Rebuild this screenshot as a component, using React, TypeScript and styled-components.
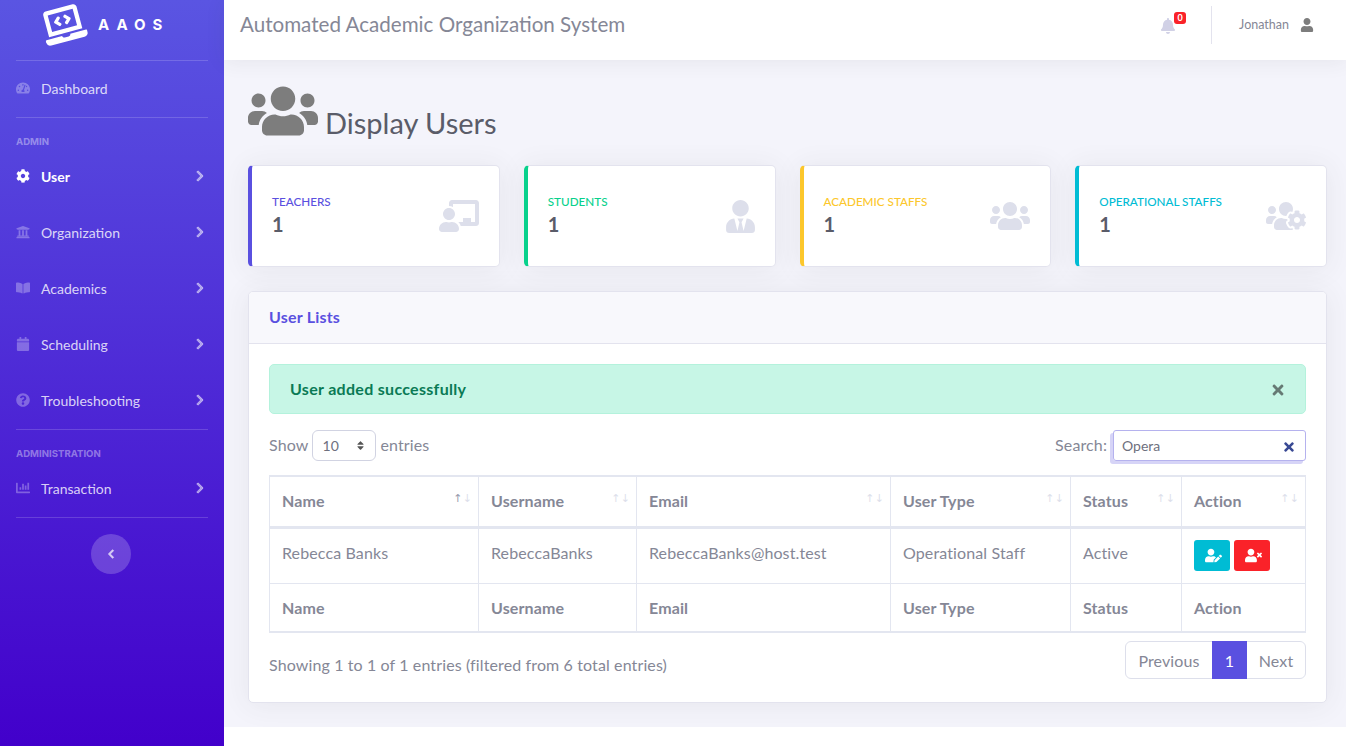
import React from "react";
import styled, { createGlobalStyle } from "styled-components";
import {
  FaBell, FaBookOpen, FaCalendar, FaChalkboardTeacher, FaChartBar, FaChevronLeft, FaChevronRight,
  FaCog, FaLaptopCode, FaQuestionCircle, FaSort, FaTachometerAlt, FaTimes, FaUniversity, FaUser,
  FaUserEdit, FaUserTie, FaUserTimes, FaUsers, FaUsersCog,
} from "react-icons/fa";

const BODY_FONT = `Lato, "Open Sans", sans-serif`;

const GlobalStyle = createGlobalStyle`
  html, body { margin: 0; padding: 0; background: #fff; }
  body { font-family: ${BODY_FONT}; color: #858796; overflow: hidden; }
  * { box-sizing: border-box; }
`;

const Shell = styled.div`
  display: flex;
  align-items: flex-start;
  width: 1346px;
`;

const Sidebar = styled.aside`
  width: 224px;
  height: 746px;
  flex: none;
  padding: 0 16px;
  background: linear-gradient(180deg, #5a55e2 0%, #4200cb 100%);
`;

const Brand = styled.div`
  height: 60px;
  display: flex;
  align-items: center;
  gap: 13px;
  padding: 0 0 11px 26px;
  color: #fff;
  svg { transform: rotate(-15deg); font-size: 43px; flex: none; }
`;

const BrandText = styled.span`
  font-family: Inter, sans-serif;
  font-weight: 700;
  font-size: 15px;
  letter-spacing: 7px;
`;

const Divider = styled.hr`
  margin: 0;
  border: 0;
  border-top: 1px solid rgba(255, 255, 255, 0.17);
`;

const NavItem = styled.a<{ $active?: boolean }>`
  height: 56px;
  display: flex;
  align-items: center;
  padding-bottom: 2px;
  font-size: 14px;
  color: ${(p) => (p.$active ? "#fff" : "rgba(255, 255, 255, 0.8)")};
  font-weight: ${(p) => (p.$active ? 700 : 400)};
`;

const NavIcon = styled.span<{ $active?: boolean }>`
  width: 25px;
  display: flex;
  font-size: 14px;
  color: ${(p) => (p.$active ? "#fff" : "rgba(255, 255, 255, 0.3)")};
`;

const NavLabel = styled.span`
  flex: 1;
`;

const NavArrow = styled.span`
  display: flex;
  font-size: 12px;
  margin-right: 2px;
  color: rgba(255, 255, 255, 0.55);
  svg { stroke: currentColor; stroke-width: 30px; }
`;

const NavHeading = styled.div`
  height: 31px;
  padding-top: 18px;
  font-family: Inter, sans-serif;
  font-size: 9.6px;
  line-height: 11px;
  font-weight: 700;
  color: rgba(255, 255, 255, 0.4);
`;

const ToggleRow = styled.div`
  display: flex;
  justify-content: center;
  padding: 16px 2px 0 0;
`;

const Toggle = styled.button`
  width: 40px;
  height: 40px;
  border: 0;
  padding: 0;
  border-radius: 50%;
  display: flex;
  align-items: center;
  justify-content: center;
  font-size: 10px;
  color: rgba(255, 255, 255, 0.7);
  background: rgba(255, 255, 255, 0.2);
  svg { stroke: currentColor; stroke-width: 30px; }
`;

const Main = styled.main`
  width: 1122px;
  background: #f4f4fb;
`;

const Topbar = styled.header`
  height: 60px;
  background: #fff;
  display: flex;
  align-items: center;
  padding: 0 32px 10px 16px;
  box-shadow: 0 2px 20px rgba(58, 59, 69, 0.08);
  position: relative;
`;

const AppTitle = styled.div`
  flex: 1;
  font-size: 20.6px;
  line-height: 24px;
  margin-top: -3px;
  color: #858796;
`;

const BellWrap = styled.div`
  position: relative;
  display: flex;
  font-size: 16px;
  color: #d1d1e6;
  margin-right: 35px;
  margin-top: 1px;
`;

const Badge = styled.span`
  position: absolute;
  top: -6px;
  left: 14px;
  width: 12px;
  height: 12px;
  border-radius: 3px;
  background: #fa2229;
  color: #fff;
  font-size: 9px;
  line-height: 12px;
  font-weight: 700;
  text-align: center;
`;

const TopDivider = styled.div`
  width: 1px;
  height: 38px;
  margin: 0 27px 0 0;
  background: #e3e3ee;
`;

const UserName = styled.span`
  font-size: 12.5px;
  margin-top: -2px;
  color: #858796;
  margin-right: 11px;
`;

const UserIcon = styled.span`
  display: flex;
  font-size: 14px;
  color: #7d7d7d;
`;

const Content = styled.div`
  padding: 24px 19px 24px 24px;
`;

const PageTitle = styled.div`
  display: flex;
  align-items: flex-end;
  gap: 8px;
  height: 53px;
  margin-bottom: 28px;
  font-size: 29px;
  line-height: 34px;
  color: #5a5c69;
  svg { font-size: 70px; height: 56px; color: #7d7d7d; flex: none; margin-bottom: -2px; }
`;

const TitleText = styled.span`
  margin-bottom: -3px;
  margin-left: -1px;
`;

const Stats = styled.div`
  display: grid;
  grid-template-columns: repeat(4, 1fr);
  gap: 24px;
  margin-bottom: 24px;
`;

const StatCard = styled.div<{ $color: string }>`
  height: 102px;
  display: flex;
  align-items: center;
  background: #fff;
  border: 1px solid #e3e3ee;
  border-left: 4px solid ${(p) => p.$color};
  border-radius: 5px;
  padding: 0 20px;
  box-shadow: 0 2px 28px rgba(58, 59, 69, 0.08);
`;

const StatBody = styled.div`
  flex: 1;
`;

const StatLabel = styled.div<{ $color: string }>`
  font-size: 11.7px;
  line-height: 14px;
  font-weight: 500;
  color: ${(p) => p.$color};
  text-transform: uppercase;
  margin-bottom: 4px;
`;

const StatValue = styled.div`
  font-size: 20px;
  line-height: 24px;
  font-weight: 700;
  color: #5a5c69;
  margin-bottom: 2px;
`;

const StatIcon = styled.span<{ $size?: number }>`
  display: flex;
  font-size: ${(p) => p.$size ?? 40}px;
  margin-right: ${(p) => (p.$size ? -2 : 0)}px;
  color: #dddfeb;
`;

const Panel = styled.section`
  height: 412px;
  background: #fff;
  border: 1px solid #e3e3ee;
  border-radius: 5px;
  box-shadow: 0 2px 28px rgba(58, 59, 69, 0.08);
  overflow: hidden;
  font-size: 16px;
  letter-spacing: 0.12px;
`;

const PanelHeader = styled.div`
  height: 52px;
  background: #f8f8fc;
  border-bottom: 1px solid #e3e3ee;
  display: flex;
  align-items: center;
  padding-left: 20px;
  padding-bottom: 3px;
  font-weight: 700;
  letter-spacing: 0.2px;
  color: #5a50e0;
`;

const PanelBody = styled.div`
  padding: 20px 20px 0;
`;

const Alert = styled.div`
  height: 50px;
  display: flex;
  align-items: center;
  justify-content: space-between;
  padding: 0 21px 2px 20px;
  margin-bottom: 16px;
  background: #c7f6e6;
  border: 1px solid #b4f2dc;
  border-radius: 5px;
  font-weight: 700;
  letter-spacing: 0.3px;
  color: #0a7a55;
`;

const AlertClose = styled.span`
  display: flex;
  font-size: 16px;
  color: #667a74;
  margin-top: 3px;
  margin-right: -2px;
`;

const Controls = styled.div`
  display: flex;
  justify-content: space-between;
  align-items: center;
  height: 31px;
  margin-bottom: 14px;
`;

const ControlGroup = styled.div`
  display: flex;
  align-items: center;
  gap: 4px;
  margin-top: -3px;
`;

const LengthSelect = styled.div`
  width: 64px;
  height: 31px;
  margin-top: 3px;
  display: flex;
  align-items: center;
  justify-content: space-between;
  padding: 0 9px;
  border: 1px solid #d1d3e2;
  border-radius: 6px;
  font-size: 14px;
  color: #6e707e;
  svg { font-size: 11px; color: #555; }
`;

const SearchBox = styled.div`
  width: 193px;
  height: 31px;
  margin-top: 3px;
  margin-left: 2px;
  display: flex;
  align-items: center;
  padding: 0 9px 0 8px;
  border: 1px solid #b5b2ee;
  border-radius: 3px;
  box-shadow: -3px 3px 0 #d6d4f7;
  svg { font-size: 14px; color: #3a4a94; margin-top: 3px; }
`;

const SearchInput = styled.input`
  flex: 1;
  min-width: 0;
  border: 0;
  outline: 0;
  padding: 0;
  background: none;
  font: 14px ${BODY_FONT};
  color: #6e707e;
`;

const Table = styled.table`
  width: 1036px;
  table-layout: fixed;
  border-collapse: collapse;
  border: 1px solid #e3e6f0;
  border-top-width: 2px;
  border-bottom-width: 2px;
`;

const Th = styled.th`
  height: 49px;
  padding: 0 12px;
  border: 1px solid #e3e6f0;
  font-weight: 700;
  text-align: left;
  color: #858796;
`;

const Td = styled.td`
  height: 56px;
  padding: 0 12px 7px;
  border: 1px solid #e3e6f0;
  color: #858796;
`;

const HeadRow = styled.tr`
  th { height: 51px; padding-bottom: 2px; border-bottom-width: 3px; }
`;

const HeadCell = styled.div`
  display: flex;
  justify-content: space-between;
  align-items: center;
`;

const SortArrows = styled.span`
  display: flex;
  margin-right: -6px;
  margin-top: -3px;
  font: 400 11px "DejaVu Sans", sans-serif;
  color: #dddfeb;
`;

const SortUp = styled.span<{ $on?: boolean }>`
  color: ${(p) => (p.$on ? "#9a9cae" : "#dddfeb")};
`;

const Actions = styled.div`
  display: flex;
  gap: 4px;
  margin-top: 7px;
`;

const ActionButton = styled.button<{ $bg: string }>`
  width: 36px;
  height: 31px;
  padding: 0 0 0 2px;
  border: 0;
  border-radius: 3px;
  display: flex;
  align-items: center;
  justify-content: center;
  background: ${(p) => p.$bg};
  color: #fff;
  font-size: 17px;
`;

const TableFooter = styled.div`
  display: flex;
  justify-content: space-between;
  align-items: flex-start;
  margin-top: 8px;
`;

const Info = styled.div`
  padding-top: 14px;
`;

const Pager = styled.div`
  display: flex;
  height: 38px;
  border: 1px solid #dddfeb;
  border-radius: 6px;
`;

const PageLink = styled.span<{ $width: number; $active?: boolean }>`
  width: ${(p) => p.$width}px;
  display: flex;
  align-items: center;
  justify-content: center;
  margin: ${(p) => (p.$active ? "-1px 0" : "0")};
  background: ${(p) => (p.$active ? "#5a50e0" : "transparent")};
  color: ${(p) => (p.$active ? "#fff" : "#858796")};
`;

const navMain = [
  { label: "Organization", icon: <FaUniversity /> },
  { label: "Academics", icon: <FaBookOpen /> },
  { label: "Scheduling", icon: <FaCalendar /> },
  { label: "Troubleshooting", icon: <FaQuestionCircle /> },
];

const stats = [
  { label: "Teachers", color: "#5a50e0", icon: <FaChalkboardTeacher /> },
  { label: "Students", color: "#08d18c", icon: <FaUserTie />, size: 33 },
  { label: "Academic Staffs", color: "#fcc72c", icon: <FaUsers /> },
  { label: "Operational Staffs", color: "#00bcd4", icon: <FaUsersCog /> },
];

const columns = [
  { name: "Name", width: 209 },
  { name: "Username", width: 158 },
  { name: "Email", width: 254 },
  { name: "User Type", width: 180 },
  { name: "Status", width: 111 },
  { name: "Action", width: 124 },
];

export default function App() {
  return (
    <Shell>
      <GlobalStyle />
      <Sidebar>
        <Brand>
          <FaLaptopCode />
          <BrandText>AAOS</BrandText>
        </Brand>
        <Divider />
        <NavItem>
          <NavIcon><FaTachometerAlt /></NavIcon>
          <NavLabel>Dashboard</NavLabel>
        </NavItem>
        <Divider />
        <NavHeading>ADMIN</NavHeading>
        <NavItem $active>
          <NavIcon $active><FaCog /></NavIcon>
          <NavLabel>User</NavLabel>
          <NavArrow><FaChevronRight /></NavArrow>
        </NavItem>
        {navMain.map((item) => (
          <NavItem key={item.label}>
            <NavIcon>{item.icon}</NavIcon>
            <NavLabel>{item.label}</NavLabel>
            <NavArrow><FaChevronRight /></NavArrow>
          </NavItem>
        ))}
        <Divider />
        <NavHeading>ADMINISTRATION</NavHeading>
        <NavItem>
          <NavIcon><FaChartBar /></NavIcon>
          <NavLabel>Transaction</NavLabel>
          <NavArrow><FaChevronRight /></NavArrow>
        </NavItem>
        <Divider />
        <ToggleRow>
          <Toggle><FaChevronLeft /></Toggle>
        </ToggleRow>
      </Sidebar>

      <Main>
        <Topbar>
          <AppTitle>Automated Academic Organization System</AppTitle>
          <BellWrap>
            <FaBell />
            <Badge>0</Badge>
          </BellWrap>
          <TopDivider />
          <UserName>Jonathan</UserName>
          <UserIcon><FaUser /></UserIcon>
        </Topbar>

        <Content>
          <PageTitle>
            <FaUsers />
            <TitleText>Display Users</TitleText>
          </PageTitle>

          <Stats>
            {stats.map((s) => (
              <StatCard key={s.label} $color={s.color}>
                <StatBody>
                  <StatLabel $color={s.color}>{s.label}</StatLabel>
                  <StatValue>1</StatValue>
                </StatBody>
                <StatIcon $size={s.size}>{s.icon}</StatIcon>
              </StatCard>
            ))}
          </Stats>

          <Panel>
            <PanelHeader>User Lists</PanelHeader>
            <PanelBody>
              <Alert>
                User added successfully
                <AlertClose><FaTimes /></AlertClose>
              </Alert>
              <Controls>
                <ControlGroup>
                  Show
                  <LengthSelect>10 <FaSort /></LengthSelect>
                  entries
                </ControlGroup>
                <ControlGroup>
                  Search:
                  <SearchBox>
                    <SearchInput value="Opera" readOnly />
                    <FaTimes />
                  </SearchBox>
                </ControlGroup>
              </Controls>

              <Table>
                <colgroup>
                  {columns.map((c) => <col key={c.name} width={c.width} />)}
                </colgroup>
                <thead>
                  <HeadRow>
                    {columns.map((c, i) => (
                      <Th key={c.name}>
                        <HeadCell>
                          {c.name}
                          <SortArrows><SortUp $on={i === 0}>↑</SortUp>↓</SortArrows>
                        </HeadCell>
                      </Th>
                    ))}
                  </HeadRow>
                </thead>
                <tbody>
                  <tr>
                    <Td>Rebecca Banks</Td>
                    <Td>RebeccaBanks</Td>
                    <Td>RebeccaBanks@host.test</Td>
                    <Td>Operational Staff</Td>
                    <Td>Active</Td>
                    <Td>
                      <Actions>
                        <ActionButton $bg="#00bcd4"><FaUserEdit /></ActionButton>
                        <ActionButton $bg="#fa2229"><FaUserTimes /></ActionButton>
                      </Actions>
                    </Td>
                  </tr>
                </tbody>
                <tfoot>
                  <tr>
                    {columns.map((c) => <Th key={c.name}>{c.name}</Th>)}
                  </tr>
                </tfoot>
              </Table>

              <TableFooter>
                <Info>Showing 1 to 1 of 1 entries (filtered from 6 total entries)</Info>
                <Pager>
                  <PageLink $width={86}>Previous</PageLink>
                  <PageLink $width={35} $active>1</PageLink>
                  <PageLink $width={58}>Next</PageLink>
                </Pager>
              </TableFooter>
            </PanelBody>
          </Panel>
        </Content>
      </Main>
    </Shell>
  );
}
